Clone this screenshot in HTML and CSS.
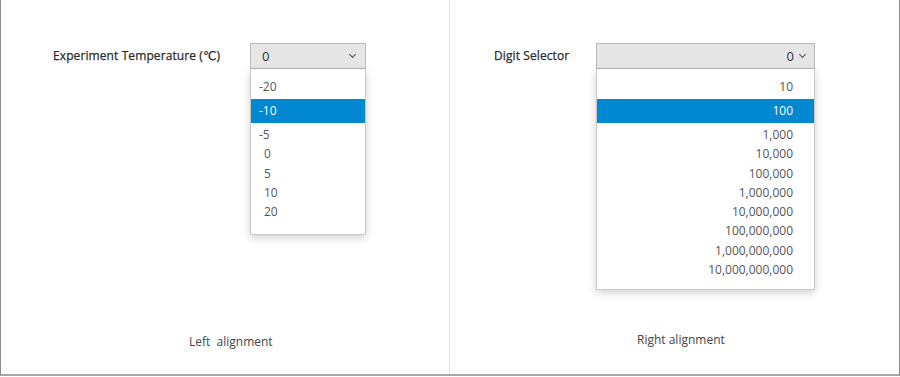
FILE: index.html
```html
<!DOCTYPE html>
<html>
<head>
    <title>Dropdown Alignment</title>
    <link rel="stylesheet" href="styles.css">
</head>
<body>
    <div class="frame">
        <!-- Left aligned dropdown -->
        <div class="panel panel-left">
            <div class="field">
                <span class="field-label">Experiment Temperature (℃)</span>
                <div class="select">
                    <div class="select-value">
                        <span>0</span>
                        <span class="chevron"></span>
                    </div>
                    <ul class="options">
                        <li class="tall">-20</li>
                        <li class="tall active">-10</li>
                        <li>-5</li>
                        <li class="pos">0</li>
                        <li class="pos">5</li>
                        <li class="pos">10</li>
                        <li class="pos">20</li>
                    </ul>
                </div>
            </div>
            <div class="caption">Left&nbsp; alignment</div>
        </div>

        <!-- Right aligned dropdown -->
        <div class="panel panel-right">
            <div class="field">
                <span class="field-label">Digit Selector</span>
                <div class="select select-right">
                    <div class="select-value">
                        <span>0</span>
                        <span class="chevron"></span>
                    </div>
                    <ul class="options">
                        <li class="tall">10</li>
                        <li class="tall active">100</li>
                        <li>1,000</li>
                        <li>10,000</li>
                        <li>100,000</li>
                        <li>1,000,000</li>
                        <li>10,000,000</li>
                        <li>100,000,000</li>
                        <li>1,000,000,000</li>
                        <li>10,000,000,000</li>
                    </ul>
                </div>
            </div>
            <div class="caption">Right alignment</div>
        </div>
    </div>
</body>
</html>
```
FILE: styles.css
```css
body {
    margin: 0;
    font-family: 'Open Sans', 'DejaVu Sans', sans-serif;
    font-size: 12px;
    color: #333;
    background: #fff;
}
.frame {
    display: flex;
    width: 900px;
    height: 376px;
    box-sizing: border-box;
    border-left: 1px solid #8c8c8c;
    border-right: 1px solid #8c8c8c;
    border-bottom: 2px solid #a6a6a6;
}
.panel {
    display: flex;
    flex-direction: column;
    padding-top: 43px;
    box-sizing: border-box;
}
.panel-left {
    width: 449px;
    padding-left: 52px;
    padding-bottom: 24px;
    border-right: 1px solid #e2e2e2;
}
.panel-right {
    flex: 1;
    padding-left: 44px;
    padding-bottom: 26px;
    margin-top: 2px;
    padding-top: 41px;
}
.field {
    display: flex;
    align-items: flex-start;
}
.field-label {
    line-height: 26px;
    font-weight: 500;
    letter-spacing: 0.1px;
    color: #2b2b2b;
    -webkit-text-stroke: 0.25px #2b2b2b;
}
.panel-left .field-label { width: 197px; }
.panel-right .field-label { width: 102px; }

.select {
    position: relative;
    width: 116px;
}
.select-right { width: 219px; }
.select-value {
    display: flex;
    align-items: center;
    height: 26px;
    box-sizing: border-box;
    padding: 0 10px 0 11px;
    background: #e6e6e6;
    border: 1px solid #b8b8b8;
    color: #333;
    font-size: 13px;
}
.select-value span:first-child { flex: 1; }
.select-right .select-value { padding-right: 9px; }
.select-right .select-value span:first-child { text-align: right; margin-right: 6px; }
.chevron {
    width: 4px;
    height: 4px;
    border-right: 1px solid #555;
    border-bottom: 1px solid #555;
    transform: rotate(45deg);
    margin-top: -3px;
}
.options {
    position: absolute;
    top: 26px;
    left: 0;
    right: 0;
    margin: 0;
    padding: 0 0 13px;
    list-style: none;
    background: #fff;
    border: 1px solid #c8c8c8;
    border-top: none;
    box-shadow: 0 3px 8px rgba(0,0,0,0.18);
    color: #555;
}
.select-right .options { padding-bottom: 10px; }
.options li {
    height: 19.3px;
    line-height: 19px;
    padding: 0 8px;
}
.options li.tall {
    height: 24px;
    line-height: 24px;
}
.options li:first-child { margin-top: 6px; }
.options li.active + li { margin-top: 2px; }
.options li.active {
    background: #0288d1;
    color: #fff;
}
.options li.pos { padding-left: 13px; }
.select-right .options li {
    text-align: right;
    padding-right: 21px;
}
.caption {
    margin-top: auto;
    color: #444;
}
.panel-left .caption { padding-left: 136px; }
.panel-right .caption { padding-left: 143px; }
```
